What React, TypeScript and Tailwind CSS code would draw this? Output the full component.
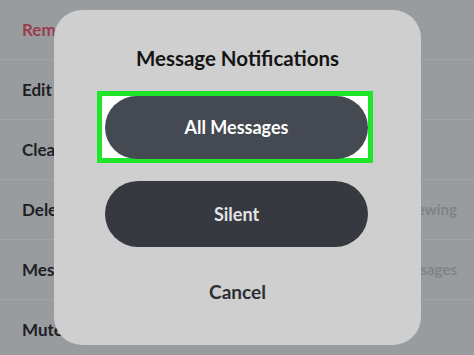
import React from "react";

const rows = [
  { label: "Remove Friend", red: true },
  { label: "Edit Name" },
  { label: "Clear Conversation" },
  { label: "Delete Chats", value: "After Viewing" },
  { label: "Message Notifications", value: "All Messages" },
  { label: "Mute Story" },
];

export default function App() {
  return (
    <div
      className="relative w-[474px] h-[355px] overflow-hidden bg-[#999c9f]"
      style={{ fontFamily: "Lato, 'Open Sans', sans-serif" }}
    >
      {/* settings list behind the sheet */}
      <ul className="flex flex-col">
        {rows.map((r) => (
          <li
            key={r.label}
            className="flex h-[60px] items-center justify-between border-b border-[#a2a5a8] pl-[22px] pr-[17px]"
          >
            <span
              className={
                r.red
                  ? "text-[17px] font-bold text-[#9c3d4d]"
                  : "text-[17px] font-bold text-[#1e2024]"
              }
            >
              {r.label}
            </span>
            {r.value && (
              <span className="text-[15px] font-bold text-[#808387]">{r.value}</span>
            )}
          </li>
        ))}
      </ul>

      {/* action sheet */}
      <div className="absolute left-[54px] top-[10px] flex h-[335px] w-[367px] flex-col items-center rounded-[28px] bg-[#cfcfcf]">
        <h2 className="mt-[35px] text-[20.5px] font-bold leading-[26px] text-[#151515]">
          Message Notifications
        </h2>

        <div className="mt-[20px] ml-[43px] flex h-[72px] w-[276px] items-center self-start border-[5px] border-[#1fe62b] bg-white pl-[3px]">
          <button className="flex h-[63px] w-full items-center justify-center rounded-full bg-[#444952] text-[18px] font-bold text-white">
            All Messages
          </button>
        </div>

        <button className="mt-[18px] ml-[51px] flex h-[66px] w-[263px] items-center justify-center self-start rounded-full bg-[#363940] text-[18px] font-bold text-[#e4e4e4]">
          Silent
        </button>

        <button className="mt-[31px] text-[19px] font-bold text-[#2c2e33]">Cancel</button>
      </div>
    </div>
  );
}
